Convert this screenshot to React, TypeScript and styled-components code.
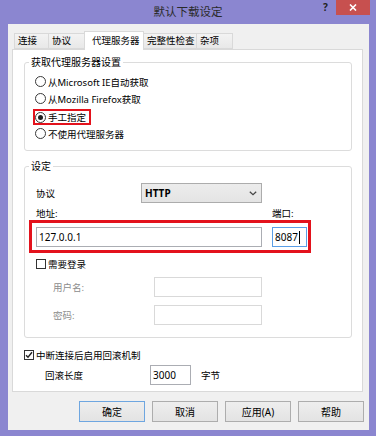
import React from "react";
import styled, { createGlobalStyle } from "styled-components";

const FONT = `"Noto Sans", "Noto Sans CJK SC", sans-serif`;

const GlobalStyle = createGlobalStyle`
  body { margin: 0; background: #8b86d0; }
  * { box-sizing: border-box; }
`;

const Frame = styled.div`
  width: 376px;
  height: 436px;
  background: #8b86d0;
  display: flex;
  flex-direction: column;
  font-family: ${FONT};
  font-size: 9.5px;
  color: #000;
`;

const TitleBar = styled.div`
  height: 24px;
  flex: none;
  display: grid;
  grid-template-columns: 1fr auto 1fr;
  align-items: start;
`;

const Title = styled.div`
  grid-column: 2;
  font-size: 11.5px;
  line-height: 24px;
  color: #2a2a2a;
`;

const Controls = styled.div`
  justify-self: end;
  display: flex;
  align-items: center;
  margin-right: 6px;
`;

const HelpGlyph = styled.span`
  width: 11px;
  margin-right: 5px;
  font-size: 10px;
  font-weight: 700;
  line-height: 15px;
  text-align: center;
  color: #222;
`;

const CloseButton = styled.div`
  width: 34px;
  height: 15px;
  background: #c7504f;
  display: flex;
  align-items: center;
  justify-content: center;
`;

const Client = styled.div`
  flex: 1;
  margin: 0 7px 6px 8px;
  background: #f0f0f0;
  display: flex;
  flex-direction: column;
  padding: 7px 5px 8px 4px;
`;

const TabRow = styled.div`
  display: flex;
  align-items: flex-end;
  height: 19px;
  margin: 0 0 -1px 2px;
  position: relative;
  z-index: 1;
`;

const Tab = styled.div<{ $w: number; $active?: boolean }>`
  width: ${(p) => p.$w}px;
  height: ${(p) => (p.$active ? 19 : 16)}px;
  margin-bottom: ${(p) => (p.$active ? 0 : 1)}px;
  margin-left: -1px;
  border: 1px solid #d9d9d9;
  border-bottom: ${(p) => (p.$active ? "none" : "1px solid #d9d9d9")};
  background: ${(p) => (p.$active ? "#fff" : "linear-gradient(#f3f3f3, #e8e8e8)")};
  padding: ${(p) => (p.$active ? "1px 0 0 7px" : "0 0 0 3px")};
  line-height: ${(p) => (p.$active ? 15 : 14)}px;
  white-space: nowrap;
  position: relative;
  z-index: ${(p) => (p.$active ? 2 : 1)};
  &:first-child { margin-left: 0; }
`;

const Panel = styled.div`
  height: 343px;
  margin-right: 1px;
  background: #fff;
  border: 1px solid #d9d9d9;
  padding: 4px 10px 0 11px;
  display: flex;
  flex-direction: column;
`;

const Group = styled.fieldset<{ $top?: number }>`
  margin: ${(p) => p.$top ?? 0}px 0 0 0;
  padding: 0;
  border: 1px solid #dcdcdc;
  border-radius: 3px;
  min-inline-size: 0;
`;

const Legend = styled.legend`
  margin-left: 4px;
  padding: 0 2px;
  font-size: 10px;
  line-height: 16px;
`;

const GroupBody = styled.div<{ $pad: string }>`
  padding: ${(p) => p.$pad};
  display: flex;
  flex-direction: column;
`;

const RadioRow = styled.div`
  height: 17px;
  display: flex;
  align-items: center;
  gap: 2px;
  white-space: nowrap;
`;

const Highlight = styled.div<{ $inline?: boolean }>`
  display: ${(p) => (p.$inline ? "inline-flex" : "flex")};
  align-self: flex-start;
  border: ${(p) => (p.$inline ? 2 : 3)}px solid #e3121c;
`;

const RadioHighlight = styled(Highlight)`
  height: 16px;
  margin: 2px 0 0 -2px;
  padding-right: 3px;
  align-items: center;
  & > ${RadioRow} { height: 12px; }
`;

const RadioCircle = styled.span<{ $on?: boolean }>`
  width: 11px;
  height: 11px;
  flex: none;
  border-radius: 50%;
  border: 1px solid #3a3a3a;
  background: #fff;
  display: flex;
  align-items: center;
  justify-content: center;
  &::after {
    content: "";
    width: 5px;
    height: 5px;
    border-radius: 50%;
    background: ${(p) => (p.$on ? "#1e1e1e" : "transparent")};
  }
`;

const FieldRow = styled.div<{ $top: number; $indent?: number }>`
  display: flex;
  align-items: center;
  height: 20px;
  margin-top: ${(p) => p.$top}px;
  padding-left: ${(p) => p.$indent ?? 0}px;
  white-space: nowrap;
`;

const Label = styled.span<{ $w: number; $muted?: boolean }>`
  width: ${(p) => p.$w}px;
  flex: none;
  color: ${(p) => (p.$muted ? "#8c8c8c" : "inherit")};
`;

const CaptionRow = styled.div`
  display: flex;
  height: 13px;
  line-height: 13px;
  margin-top: 4px;
`;

const AddressBox = styled(Highlight)`
  margin: 0 0 0 -7px;
  padding: 4px 1px 3px 4px;
  gap: 10px;
`;

const Input = styled.div<{ $w: number; $state?: "focus" | "disabled" }>`
  width: ${(p) => p.$w}px;
  height: 20px;
  flex: none;
  background: #fff;
  border: 1px solid
    ${(p) => (p.$state === "focus" ? "#5a9ee6" : p.$state === "disabled" ? "#d9d9d9" : "#abadb3")};
  padding-left: 2px;
  display: flex;
  align-items: center;
  font-size: 10px;
`;

const Caret = styled.span`
  width: 1px;
  height: 13px;
  background: #000;
  margin-left: 1px;
`;

const Select = styled.div`
  width: 121px;
  height: 20px;
  border: 1px solid #acacac;
  background: linear-gradient(#ececec, #e4e4e4);
  display: flex;
  align-items: center;
  justify-content: space-between;
  padding: 0 4px 0 3px;
  font-weight: 700;
  font-size: 10px;
`;

const CheckRow = styled.div<{ $top: number }>`
  display: flex;
  align-items: center;
  height: 16px;
  margin-top: ${(p) => p.$top}px;
  gap: 2px;
  white-space: nowrap;
`;

const CheckBox = styled.span`
  width: 10px;
  height: 10px;
  flex: none;
  border: 1px solid #333;
  background: #fff;
  display: flex;
  align-items: center;
  justify-content: center;
`;

const Unit = styled.span`
  margin-left: 10px;
`;

const ButtonRow = styled.div`
  display: flex;
  justify-content: flex-end;
  gap: 7px;
  margin-top: 9px;
`;

const Button = styled.div<{ $default?: boolean }>`
  width: 66px;
  height: 21px;
  border: 1px solid ${(p) => (p.$default ? "#6ea6e0" : "#adadad")};
  background: linear-gradient(#eeeeee, #e3e3e3);
  display: flex;
  align-items: center;
  justify-content: center;
  font-size: 10px;
`;

function Radio({ label, on }: { label: string; on?: boolean }) {
  return (
    <RadioRow>
      <RadioCircle $on={on} />
      {label}
    </RadioRow>
  );
}

function Check({ label, on, top }: { label: string; on?: boolean; top: number }) {
  return (
    <CheckRow $top={top}>
      <CheckBox>
        {on && (
          <svg width="8" height="8" viewBox="0 0 8 8">
            <path d="M1 4.2 L3 6.3 L7 1.3" fill="none" stroke="#222" strokeWidth="1.4" />
          </svg>
        )}
      </CheckBox>
      {label}
    </CheckRow>
  );
}

const tabs = [
  { label: "连接", w: 35 },
  { label: "协议", w: 37 },
  { label: "代理服务器", w: 60, active: true },
  { label: "完整性检查", w: 54 },
  { label: "杂项", w: 37 },
];

export default function App() {
  return (
    <>
      <GlobalStyle />
      <Frame>
        <TitleBar>
          <Title>默认下载设定</Title>
          <Controls>
            <HelpGlyph>?</HelpGlyph>
            <CloseButton>
              <svg width="8" height="7" viewBox="0 0 8 7">
                <path d="M1 0.5 L7 6.5 M7 0.5 L1 6.5" stroke="#fff" strokeWidth="1.6" />
              </svg>
            </CloseButton>
          </Controls>
        </TitleBar>

        <Client>
          <TabRow>
            {tabs.map((t) => (
              <Tab key={t.label} $w={t.w} $active={t.active}>
                {t.label}
              </Tab>
            ))}
          </TabRow>

          <Panel>
            <Group>
              <Legend>获取代理服务器设置</Legend>
              <GroupBody $pad="3px 0 8px 10px">
                <Radio label="从Microsoft IE自动获取" />
                <Radio label="从Mozilla Firefox获取" />
                <RadioHighlight $inline>
                  <Radio label="手工指定" on />
                </RadioHighlight>
                <Radio label="不使用代理服务器" />
              </GroupBody>
            </Group>

            <Group $top={7}>
              <Legend>设定</Legend>
              <GroupBody $pad="0 0 12px 11px">
                <FieldRow $top={9}>
                  <Label $w={105}>协议</Label>
                  <Select>
                    HTTP
                    <svg width="8" height="5" viewBox="0 0 8 5">
                      <path d="M0.8 0.8 L4 3.8 L7.2 0.8" fill="none" stroke="#444" strokeWidth="1.2" />
                    </svg>
                  </Select>
                </FieldRow>
                <CaptionRow>
                  <Label $w={236}>地址:</Label>
                  <Label $w={40}>端口:</Label>
                </CaptionRow>
                <AddressBox>
                  <Input $w={226}>127.0.0.1</Input>
                  <Input $w={35} $state="focus">
                    8087
                    <Caret />
                  </Input>
                </AddressBox>
                <Check label="需要登录" top={3} />
                <FieldRow $top={5} $indent={17}>
                  <Label $w={101} $muted>
                    用户名:
                  </Label>
                  <Input $w={108} $state="disabled" />
                </FieldRow>
                <FieldRow $top={8} $indent={17}>
                  <Label $w={101} $muted>
                    密码:
                  </Label>
                  <Input $w={108} $state="disabled" />
                </FieldRow>
              </GroupBody>
            </Group>

            <Check label="中断连接后启用回滚机制" on top={9} />
            <FieldRow $top={2} $indent={21}>
              <Label $w={105}>回滚长度</Label>
              <Input $w={41}>3000</Input>
              <Unit>字节</Unit>
            </FieldRow>
          </Panel>

          <ButtonRow>
            <Button $default>确定</Button>
            <Button>取消</Button>
            <Button>应用(A)</Button>
            <Button>帮助</Button>
          </ButtonRow>
        </Client>
      </Frame>
    </>
  );
}
